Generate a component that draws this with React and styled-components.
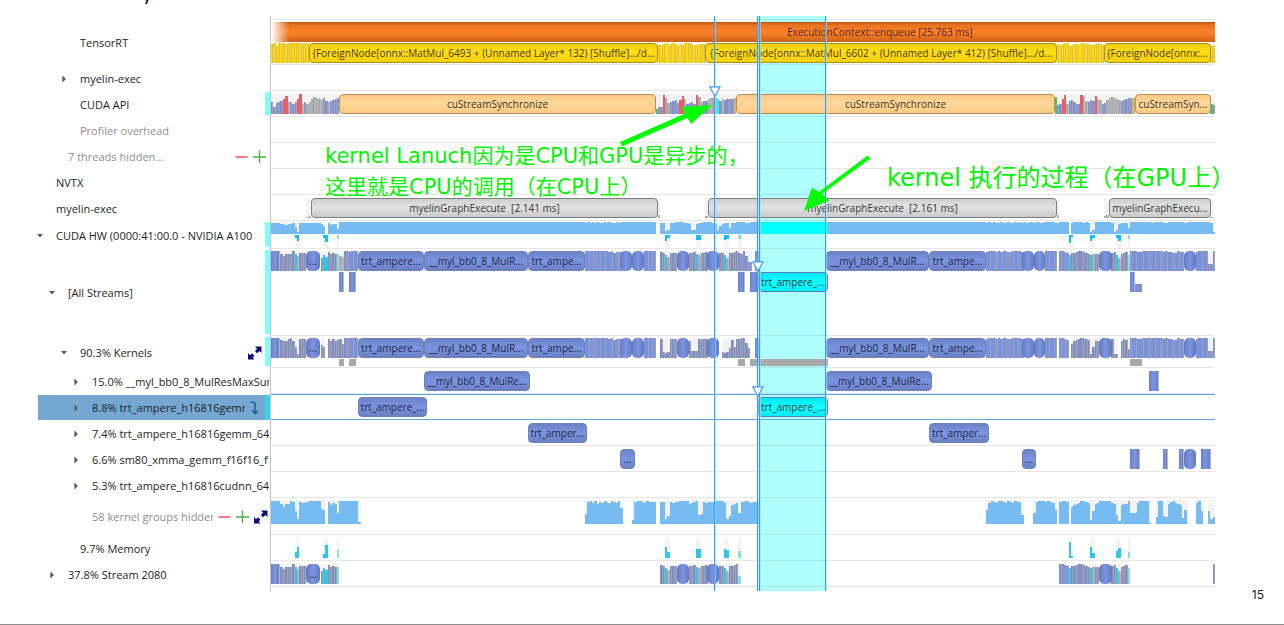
import React from "react";
import styled, { createGlobalStyle, css } from "styled-components";

const GlobalStyle = createGlobalStyle`
  * { box-sizing: border-box; }
  body {
    margin: 0;
    background: #fff;
    color: #1e1e1e;
    font: 11px/16px "Open Sans", "Noto Sans", sans-serif;
  }
`;

/* The time axis is 944 units long and is divided into 400 sampling bins. */
const SPAN = 944;
const BINS = 400;
const pct = (v) => `${(v / SPAN) * 100}%`;

const Page = styled.div`
  display: flex;
  flex-direction: column;
  min-height: 100vh;
  overflow-x: hidden;
`;

const TitleBar = styled.header`
  height: 16px;
  padding: 0 0 12px 142px;
`;

const Title = styled.h1`
  display: flex;
  align-items: flex-end;
  height: 4px;
  margin: 0;
  overflow: hidden;
  font: 20px/20px "Open Sans", sans-serif;
  color: #000;
`;

const Timeline = styled.main`
  position: relative;
  padding: 3px 69px 4px 0;
`;

const Row = styled.section`
  position: relative;
  z-index: 1;
  display: grid;
  grid-template-columns: 271px minmax(0, 1fr);
  height: ${(p) => p.$height}px;
`;

const LabelCell = styled.div`
  display: flex;
  align-items: center;
  min-width: 0;
  overflow: hidden;
  padding-top: 1px;
  padding-left: ${(p) => 32 + p.$depth * 12}px;
  padding-right: ${(p) => p.$end}px;
  background-repeat: no-repeat;
  ${(p) =>
    p.$gutter &&
    css`
      background-image: linear-gradient(#80ffff, #80ffff);
      background-size: 5px calc(100% - 3px);
      background-position: 265px 1px;
    `}
  ${(p) =>
    p.$selected &&
    css`
      background-image: linear-gradient(#38d3e8, #38d3e8), linear-gradient(#74a8d3, #74a8d3);
      background-size: 5px 100%, 232px 100%;
      background-position: 265px 1px, 38px 1px;
    `}
`;

const Toggle = styled.button`
  flex: none;
  display: flex;
  justify-content: center;
  align-items: center;
  width: 16px;
  height: 16px;
  margin: 0 8px 0 0;
  padding: 0;
  border: 0;
  background: none;
`;

const ToggleSpace = styled.span`
  flex: none;
  width: 24px;
`;

const LabelText = styled.span`
  flex: 1;
  min-width: 0;
  overflow: hidden;
  white-space: nowrap;
  color: ${(p) => (p.$muted ? "#8f8f8f" : "#1e1e1e")};
`;

const Actions = styled.span`
  flex: none;
  display: flex;
  gap: 5px;
  padding-left: 5px;
`;

const IconButton = styled.button`
  display: flex;
  padding: 0;
  border: 0;
  background: none;
`;

/* A track stacks its lanes from the top, one pixel apart. */
const Track = styled.div`
  display: flex;
  flex-direction: column;
  gap: 1px;
  min-width: 0;
  overflow: hidden;
  padding-top: ${(p) => p.$inset}px;
  border-bottom: 1px solid rgba(120, 120, 120, 0.18);
  ${(p) => p.$first && css`border-top: 1px solid rgba(120, 120, 120, 0.18);`}
  ${(p) =>
    p.$selected &&
    css`
      border-top: 1px solid #6aa5d8;
      border-bottom: 1px solid #6aa5d8;
    `}
`;

/* The histogram and the events of a lane share one grid cell. */
const LaneGrid = styled.div`
  flex: none;
  display: grid;
  grid-template: minmax(0, 1fr) / minmax(0, 1fr);
  height: ${(p) => p.$tall}px;
  > * { grid-area: 1 / 1; }
`;

const EventStrip = styled.div`
  display: flex;
  align-items: ${(p) => (p.$low ? "flex-end" : "stretch")};
  min-width: 0;
`;

const tones = {
  context: css`
    background: linear-gradient(#b9560f, #e87220 15%, #fb7f27 45%, #f47a24 65%, #c9621a);
    color: #4a2408;
    mask-image: linear-gradient(90deg, transparent, #000 18px);
  `,
  layer: css`
    background: linear-gradient(#f0cc10, #ffdd15 40%, #f5d010);
    border: 1px solid #a98f12;
    color: #4a3d05;
  `,
  sync: css`
    background: linear-gradient(#fdcb83, #fed79e 45%, #fccb80);
    border: 1px solid #b08f5c;
    color: #40341f;
  `,
  graph: css`
    background: linear-gradient(#cfcfcf, #e2e2e2 45%, #cbcbcb);
    border: 1px solid #7e7e7e;
    color: #333;
  `,
  kernel: css`
    background: linear-gradient(#6b82c6, #7b95e2 50%, #6b80c2);
    border: 1px solid #7081b9;
    color: #1d2647;
  `,
  picked: css`
    background: linear-gradient(#00e6f2, #12ffff 50%, #00eef8);
    border: 1px solid #5d7fb8;
    color: #0b4246;
  `,
  block: css`
    background: linear-gradient(90deg, #6b80c4, #7b95e2 50%, #6b80c4);
    border-right: 1px solid #b5b7c4;
    border-radius: 0;
  `,
  low: css`
    height: 8px;
    background: #7b90d6;
    border-radius: 0;
  `,
  oval: css`
    background: linear-gradient(90deg, #6479bd, #7b95e2 50%, #6479bd);
    border-radius: 5px;
    color: #1d2647;
  `,
  shade: css`
    background: #a9a9a9;
    border-radius: 0;
  `,
};

const EventBox = styled.div`
  flex: none;
  align-self: ${(p) => (p.$tone === "low" ? "flex-end" : "stretch")};
  display: flex;
  align-items: center;
  justify-content: center;
  overflow: hidden;
  border-radius: 4px;
  font-size: 10px;
  line-height: 18px;
  white-space: nowrap;
  ${(p) => tones[p.$tone]}
`;

const Chart = styled.svg`
  display: block;
  width: 100%;
  height: 100%;
`;

const Overlay = styled.div`
  position: absolute;
  top: 0;
  bottom: 0;
  left: 271px;
  right: 69px;
  z-index: ${(p) => p.$z};
  pointer-events: none;
`;

const Axis = styled.div`
  position: absolute;
  top: 0;
  bottom: 0;
  left: -1px;
  width: 1px;
  background: #c4c4c4;
`;

const Band = styled.div`
  position: absolute;
  top: 0;
  bottom: 0;
  background: #afffff;
`;

const Cursor = styled.div`
  position: absolute;
  top: 0;
  bottom: 0;
  width: 1px;
  background: #3a9bfa;
  box-shadow: 1px 0 0 rgba(150, 225, 255, 0.6);
`;

const Marker = styled.svg`
  position: absolute;
  top: ${(p) => p.$top}px;
  width: 12px;
  height: 11px;
  margin-left: -5px;
`;

const Note = styled.p`
  position: absolute;
  top: ${(p) => p.$top}px;
  margin: 0;
  white-space: nowrap;
  color: #00f400;
  font: ${(p) => p.$size}px/31px "DejaVu Sans", "Noto Sans CJK SC", sans-serif;
`;

const Arrows = styled.svg`
  position: absolute;
  left: 0;
  top: 0;
  width: 100%;
  height: 100%;
`;

const Footer = styled.footer`
  flex: 1;
  display: flex;
  justify-content: flex-end;
  align-items: flex-start;
  min-height: 34px;
  margin-top: -4px;
  padding-right: 20px;
  border-bottom: 1px solid #8f8f8f;
  font: 12px/16px Inter, Lato, sans-serif;
`;

/* ---------- icons ---------- */

const Minus = () => (
  <svg width="13" height="14" viewBox="0 0 13 14"><path d="M0.5 7H12.5" stroke="#ee4444" strokeWidth="1.4" /></svg>
);
const Plus = () => (
  <svg width="13" height="14" viewBox="0 0 13 14"><path d="M0 7H13M6.5 0.5V13" stroke="#4db04d" strokeWidth="1.4" /></svg>
);
const Expand = () => (
  <svg width="14" height="14" viewBox="0 0 14 14" fill="#0a0a80">
    <path d="M7 .5H13.5V7L11.4 4.9L9 7.2L6.9 5.1L9.2 2.7Z" />
    <path d="M0 7V13.5H6.5L4.6 11.6L6.4 9.8L4 7.3L2.1 9.2Z" />
    <path d="M6.4 7.2L7.6 6.2" stroke="#fff" />
  </svg>
);
const Jump = () => (
  <svg width="9" height="14" viewBox="0 0 9 14" fill="none" stroke="#2a5f92" strokeWidth="1.6">
    <path d="M0.5 1.2H3.2Q5 1.2 5 3V12" /><path d="M2 9.6L5 12.6L8 9.6" />
  </svg>
);
const Caret = ({ open }) => (
  <svg width="8" height="8" viewBox="0 0 8 8" fill="#5c5c5c">
    <path d={open ? "M1 2H7L4 5.4Z" : "M2.4 0.6V7.4L6 4Z"} />
  </svg>
);

/* ---------- histogram data ---------- */

/* Every character of a series is the height of one bin, in base 36. */
const colours = {
  k: "#7e8ec4", K: "#7a92dc", c: "#2ec6ec", l: "#86dfe6", g: "#a9a9ad", b: "#7f90cc",
  r: "#ee5c68", e: "#5fbf5f", o: "#d8b070", y: "#ffd817", s: "#76bbf1", n: "#0cc0ff", x: "#00ffff",
};
const edges = { k: "#a3a5b2", y: "#d8bf45", b: "#9ba3c4", g: "#bcbcbe" };

function Histogram({ tall, series, backdrop, hanging }) {
  const shapes = [];
  series.forEach(([kind, start, h], s) => {
    [...h].forEach((ch, i) => {
      const value = parseInt(ch, 36);
      const x = start + i;
      if (!value) return;
      if (backdrop) shapes.push(<rect key={`${s}b${i}`} x={x} y="0" width="1" height={tall} fill="#f3f3f3" />);
      const colour = kind.length > 1 ? kind[i] : kind;
      const y = hanging ? 0 : tall - value;
      shapes.push(<rect key={`${s}v${i}`} x={x} y={y} width="1.02" height={value} fill={colours[colour]} />);
      const edge = edges[colour] || (colour === "K" && x % 5 !== 0 && x % 5 !== 3 && "#a0a3b8");
      if (edge) shapes.push(<rect key={`${s}e${i}`} x={x + 0.6} y={y} width="0.42" height={value} fill={edge} />);
    });
  });
  return (
    <Chart viewBox={`0 0 ${BINS} ${tall}`} preserveAspectRatio="none" shapeRendering="crispEdges" aria-hidden="true">
      {shapes}
    </Chart>
  );
}

const layerBars = [
  ["y", 0, "jkhkkkjkkkkkkjkk"],
  ["y", 164, "iijkijkjhjikkkjiijjj"],
  ["y", 333, "jijkkhijjikkjjiijkji"],
  ["y", 398, "hi"],
];

const apiBars = [
  ["bbbbbrrgbbbrrgbgggggggbbgbbbb", 0, "c7bcdficcacfkacacfhgfegdcdefg"],
  ["ebbrggbbbbrrgbbbbrggbbggggxbgbbbbo", 163, "577jgbcdebeifabcajhcddfgggfdfefffg"],
  ["ebbrrgbbbbbrggbbbrggbbggggggbbbbbo", 332, "h9afjadecaajidcedifeabeghgfedefggg"],
  ["eb", 398, "a9"],
];

const graphBars = [["g", 15, "12"], ["g", 164, "3"], ["g", 184, "2"], ["g", 333, "3"], ["g", 353, "23"], ["g", 398, "1"]];

const flat = (n, c = "c") => c.repeat(n);
const hwBars = [
  ["s", 0, "bbbbaa9aab72bbbbbbbbba8"],
  ["s", 24, "b9aa5" + flat(104) + "bcbcbcbbcbcbbcbc" + flat(14)],
  ["s", 165, "bb34bbccccbba44abbccccba48abb6bbccccbbcccc"],
  ["x", 207, flat(29)],
  ["s", 236, flat(67) + "bcbcbbcbbcbbcbcbcbccbccbcccccbb"],
  ["s", 334, "cccc"],
  ["s", 339, "bccccbcb24cccccccb24abbb6cccccccccbccccbbcccccccbccccccccccb2"],
];
const hwCopies = [
  ["n", 10, "36"], ["n", 22, "37"], ["l", 28, "4"],
  ["n", 167, "63"], ["n", 180, "55"], ["n", 192, "54"], ["l", 198, "4"],
  ["n", 338, "82"], ["n", 347, "63"], ["n", 358, "36"], ["l", 363, "4"],
];

const streamLeft = [
  ["k", 4, "hfhhhk"], ["c", 10, "h"], ["g", 11, "f"], ["k", 12, "iii"],
  ["k", 21, "d"], ["c", 22, "ge"], ["k", 24, "jhih"], ["l", 28, "h"],
];
const streamMid = [
  ["k", 165, "ji"], ["c", 167, "g"], ["g", 168, "e"], ["k", 169, "iii"], ["k", 177, "iij"],
  ["c", 180, "h"], ["g", 181, "g"], ["k", 182, "iij"], ["k", 190, "ii"], ["c", 192, "g"], ["g", 193, "d"], ["k", 194, "iij"],
];
const streamRight = [
  ["K", 334, "kkji"], ["c", 338, "g"], ["k", 339, "iijkkjih"], ["c", 347, "g"], ["g", 348, "h"],
  ["k", 349, "hh"], ["k", 356, "ij"], ["c", 358, "g"], ["g", 359, "d"], ["k", 360, "hij"], ["l", 363, "g"],
];
const denseBars = [
  ["K", 133, "kkkkkkkkkkjkijjj"], ["K", 158, "kkkkk"],
  ["K", 303, "jkkkjkjkkjjkkkkj"], ["K", 328, "kkkkk"],
  ["K", 364, "kkkjjkkkkkkkkkjkjjiikjj"], ["K", 392, "jkkkk"], ["b", 397, "77"], ["K", 399, "k"],
];
const allStreamBars = [
  ...streamLeft, ["g", 29, "fe"], ["K", 31, "kkjkkk"],
  ...streamMid, ["k", 197, "kih"], ["K", 200, "kf"], ["b", 202, "99"], ["K", 205, "kk"],
  ...streamRight, ...denseBars,
];
const kernelBars = [
  ["k", 4, "ihhjkhb4jjj"], ["k", 21, "db"], ["k", 24, "jhjhijekk"], ["K", 33, "kkkk"],
  ["k", 165, "j656jjj"], ["k", 177, "h777jjjj"], ["k", 191, "656aibjjkkfa"], ["K", 205, "kk"],
  ["K", 334, "kkji"], ["k", 339, "ehijkkji4b"], ["k", 349, "hh"], ["k", 356, "j44"], ["k", 360, "hji9"],
  ...denseBars,
];
const groupBars = [
  ["s", 0, "nnnnkhkknmd5mllmnnnnnfe"],
  ["s", 24, "mjlkbnnnnnnnn2"],
  ["s", 133, "amnlnkmlnmlnmlng"],
  ["s", 153, "4mnnmlnmmm"],
  ["s", 165, "mm58mlmmnnnnklmn9amlmmmnnnnl58jklbmmnmlmmn"],
  ["s", 303, "elnmlnnmlnmlnmm9"],
  ["s", 323, "bmnnnmnmle"],
  ["s", 334, "mnnm"],
  ["s", 339, "hjklnnml4dklnnnnnlk93jkknbbblnnnn1"],
  ["s", 375, "7nn87kmnlkj6e"],
  ["s", 392, "lnd"],
  ["s", 397, "d57"],
];
const memoryBars = [
  ["c", 10, "6b"], ["c", 22, "4d"], ["l", 28, "8"],
  ["c", 167, "b6"], ["c", 180, "99"], ["c", 192, "98"], ["l", 198, "7"],
  ["c", 338, "g2"], ["c", 347, "b5"], ["c", 358, "7a"], ["l", 363, "6"],
];
const lastStreamBars = [...streamLeft, ...streamMid, ["K", 197, "k"], ["l", 198, "8"], ...streamRight, ["K", 399, "k"]];

/* ---------- events: [tone, from, to, text], in order of time ---------- */

const busyLane = [
  ["block", 0, 9], ["oval", 35, 49, "..."],
  ["kernel", 87, 153, "trt_ampere..."], ["kernel", 153, 257, "__myl_bb0_8_MulR..."], ["kernel", 257, 314, "trt_ampe..."],
  ["oval", 349, 361], ["oval", 361, 373], ["oval", 406, 418], ["oval", 436, 448],
  ["kernel", 555, 658, "__myl_bb0_8_MulR..."], ["kernel", 658, 715, "trt_ampe..."],
  ["oval", 751, 763], ["oval", 763, 774], ["oval", 828, 841], ["oval", 913, 925],
];

function Lane({ tall = 20, bars, backdrop = true, hanging, events = [] }) {
  return (
    <LaneGrid $tall={tall}>
      {bars && <Histogram tall={tall} series={bars} backdrop={backdrop} hanging={hanging} />}
      <EventStrip>
        {events.map(([tone, from, to, text], i) => (
          <EventBox
            key={from}
            $tone={tone}
            style={{ width: pct(to - from), marginLeft: pct(from - (i ? events[i - 1][2] : 0)) }}
          >
            {text}
          </EventBox>
        ))}
      </EventStrip>
    </LaneGrid>
  );
}

const rows = [
  {
    height: 46, label: "TensorRT", depth: 2, first: true, inset: 2,
    lanes: [
      { events: [["context", 0, 1218, "ExecutionContext::enqueue [25.763 ms]"]] },
      {
        bars: layerBars, backdrop: false,
        events: [
          ["layer", 38, 387, "{ForeignNode[onnx::MatMul_6493 + (Unnamed Layer* 132) [Shuffle].../d..."],
          ["layer", 434, 786, "{ForeignNode[onnx::MatMul_6602 + (Unnamed Layer* 412) [Shuffle].../d..."],
          ["layer", 833, 940, "{ForeignNode[onnx:..."],
        ],
      },
    ],
  },
  { height: 26, label: "myelin-exec", depth: 2, toggle: "closed" },
  {
    height: 26, label: "CUDA API", depth: 2, gutter: true, inset: 3,
    lanes: [{
      bars: apiBars,
      events: [
        ["sync", 68, 385, "cuStreamSynchronize"],
        ["sync", 465, 784, "cuStreamSynchronize"],
        ["sync", 864, 940, "cuStreamSyn..."],
      ],
    }],
  },
  { height: 26, label: "Profiler overhead", depth: 2, muted: true },
  { height: 26, label: "7 threads hidden...", depth: 1, muted: true, actions: ["minus", "plus"], end: 5 },
  { height: 26, label: "NVTX", depth: 0 },
  {
    height: 26, label: "myelin-exec", depth: 0, inset: 3,
    lanes: [{
      bars: graphBars,
      events: [
        ["graph", 40, 387, "myelinGraphExecute\u00a0 [2.141 ms]"],
        ["graph", 437, 786, "myelinGraphExecute\u00a0 [2.161 ms]"],
        ["graph", 838, 940, "myelinGraphExecu..."],
      ],
    }],
  },
  {
    height: 28, label: "CUDA HW (0000:41:00.0 - NVIDIA A100", depth: 0, toggle: "open", gutter: true, inset: 1,
    lanes: [{ tall: 12, bars: hwBars }, { tall: 12, bars: hwCopies, hanging: true }],
  },
  {
    height: 87, label: "[All Streams]", depth: 1, toggle: "open", gutter: true, inset: 2,
    lanes: [
      { bars: allStreamBars, events: busyLane },
      {
        events: [
          ["block", 68, 73], ["block", 78, 85], ["block", 467, 474], ["block", 479, 487],
          ["picked", 487, 557, "trt_ampere_..."], ["block", 859, 864], ["low", 864, 871],
        ],
      },
    ],
  },
  {
    height: 32, label: "90.3% Kernels", depth: 2, toggle: "open", gutter: true, actions: ["expand"], end: 9, inset: 2,
    lanes: [
      { bars: kernelBars, events: busyLane },
      {
        tall: 7,
        events: [["shade", 68, 73], ["shade", 78, 85], ["shade", 467, 474], ["shade", 479, 557], ["shade", 859, 871]],
      },
    ],
  },
  {
    height: 26, label: "15.0% __myl_bb0_8_MulResMaxSum", depth: 3, toggle: "closed", inset: 3,
    lanes: [{
      events: [["kernel", 153, 259, "__myl_bb0_8_MulRe..."], ["kernel", 555, 661, "__myl_bb0_8_MulRe..."], ["block", 878, 888]],
    }],
  },
  {
    height: 26, label: "8.8% trt_ampere_h16816gemm_64", depth: 3, toggle: "closed", selected: true, actions: ["jump"], end: 12, inset: 2,
    lanes: [{ events: [["kernel", 87, 156, "trt_ampere_..."], ["picked", 487, 557, "trt_ampere_..."]] }],
  },
  {
    height: 26, label: "7.4% trt_ampere_h16816gemm_64", depth: 3, toggle: "closed", inset: 3,
    lanes: [{ events: [["kernel", 257, 316, "trt_amper..."], ["kernel", 658, 718, "trt_amper..."]] }],
  },
  {
    height: 26, label: "6.6% sm80_xmma_gemm_f16f16_f16", depth: 3, toggle: "closed", inset: 3,
    lanes: [{
      events: [
        ["kernel", 349, 364, "..."], ["kernel", 751, 765, "..."], ["block", 859, 869], ["block", 892, 897],
        ["block", 908, 913], ["oval", 913, 925], ["block", 930, 940],
      ],
    }],
  },
  { height: 26, label: "5.3% trt_ampere_h16816cudnn_64", depth: 3, toggle: "closed" },
  {
    height: 37, label: "58 kernel groups hidden...", depth: 3, muted: true, actions: ["minus", "plus", "expand"], end: 3, inset: 2,
    lanes: [{ tall: 24, bars: groupBars }],
  },
  { height: 26, label: "9.7% Memory", depth: 2, inset: 3, lanes: [{ bars: memoryBars }] },
  {
    height: 26, label: "37.8% Stream 2080", depth: 1, toggle: "closed", inset: 3,
    lanes: [{
      bars: lastStreamBars,
      events: [["block", 0, 9], ["oval", 35, 49, "..."], ["oval", 406, 418], ["oval", 436, 448], ["oval", 828, 841]],
    }],
  },
];

const actionKinds = {
  minus: ["Show fewer", Minus],
  plus: ["Show more", Plus],
  expand: ["Expand", Expand],
  jump: ["Go to event", Jump],
};

function TimelineRow({ height, label, depth, toggle, muted, gutter, selected, first, actions, end = 2, inset = 0, lanes = [] }) {
  return (
    <Row $height={height}>
      <LabelCell $depth={depth} $gutter={gutter} $selected={selected} $end={end}>
        {toggle ? (
          <Toggle type="button" aria-label={`Toggle ${label}`} aria-expanded={toggle === "open"}>
            <Caret open={toggle === "open"} />
          </Toggle>
        ) : (
          <ToggleSpace />
        )}
        <LabelText $muted={muted}>{label}</LabelText>
        {actions && (
          <Actions>
            {actions.map((name) => {
              const [title, Icon] = actionKinds[name];
              return <IconButton key={name} type="button" aria-label={title}><Icon /></IconButton>;
            })}
          </Actions>
        )}
      </LabelCell>
      <Track $selected={selected} $first={first} $inset={inset}>
        {lanes.map((lane, i) => <Lane key={i} {...lane} />)}
      </Track>
    </Row>
  );
}

const markers = [[443, 70], [486, 245], [486, 370]];

export default function App() {
  return (
    <Page>
      <GlobalStyle />
      <TitleBar><Title>y</Title></TitleBar>
      <Timeline>
        <Overlay $z={0}>
          <Band style={{ left: pct(489), width: pct(66) }} />
        </Overlay>
        {rows.map((row, i) => <TimelineRow key={i} {...row} />)}
        <Overlay $z={2}>
          <Axis />
          {[443, 486, 488, 554].map((x) => <Cursor key={x} style={{ left: pct(x) }} />)}
          {markers.map(([x, top]) => (
            <Marker key={top} $top={top} style={{ left: pct(x) }} viewBox="0 0 12 11">
              <path d="M0.8 0.8H11L6 10.2Z" fill="#fff" stroke="#3a9bfa" strokeWidth="1.2" />
            </Marker>
          ))}
          <Arrows viewBox="0 0 944 575" preserveAspectRatio="none" fill="#00ff00" aria-hidden="true">
            <path d="M349 126L414 97.5L411 91L441 89L420 108L416.500 102L351 130.500Z" />
            <path d="M596.500 139.500L599.500 142.500L551 178L558 184.500L533 195L541 171.500L548 176Z" />
          </Arrows>
          <Note $top={125} $size={21} style={{ left: pct(54) }}>
            kernel Lanuch因为是CPU和GPU是异步的，
            <br />
            这里就是CPU的调用（在CPU上）
          </Note>
          <Note $top={147} $size={24} style={{ left: pct(616) }}>kernel 执行的过程（在GPU上）</Note>
        </Overlay>
      </Timeline>
      <Footer>15</Footer>
    </Page>
  );
}
